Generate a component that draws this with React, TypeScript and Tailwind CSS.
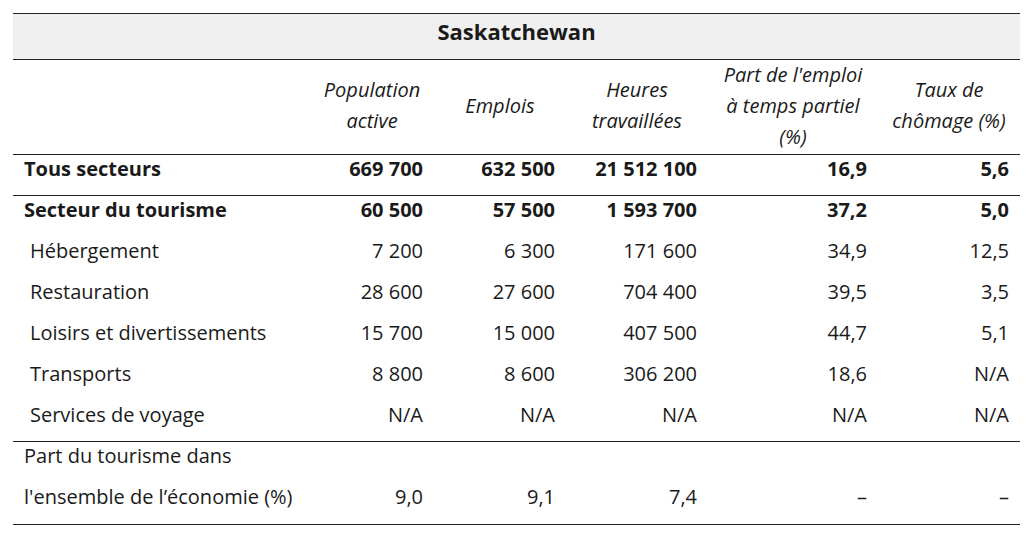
import type { FC } from "react";

type Row = {
  label: string;
  values: string[];
  bold?: boolean;
  sub?: boolean;
};

const tourism: Row[] = [
  { label: "Secteur du tourisme", values: ["60 500", "57 500", "1 593 700", "37,2", "5,0"], bold: true },
  { label: "Hébergement", values: ["7 200", "6 300", "171 600", "34,9", "12,5"], sub: true },
  { label: "Restauration", values: ["28 600", "27 600", "704 400", "39,5", "3,5"], sub: true },
  { label: "Loisirs et divertissements", values: ["15 700", "15 000", "407 500", "44,7", "5,1"], sub: true },
  { label: "Transports", values: ["8 800", "8 600", "306 200", "18,6", "N/A"], sub: true },
  { label: "Services de voyage", values: ["N/A", "N/A", "N/A", "N/A", "N/A"], sub: true },
];

const headers = [
  ["Population", "active"],
  ["Emplois"],
  ["Heures", "travaillées"],
  ["Part de l'emploi", "à temps partiel", "(%)"],
  ["Taux de", "chômage (%)"],
];

const DataRow: FC<{ row: Row }> = ({ row }) => (
  <tr className={row.bold ? "font-bold" : ""}>
    <td className={`h-[41px] align-top pr-[11px] ${row.sub ? "pl-[17px]" : "pl-[11px]"}`}>
      {row.label}
    </td>
    {row.values.map((v, i) => (
      <td key={i} className="h-[41px] align-top text-right pr-[11px]">
        {v}
      </td>
    ))}
  </tr>
);

const App: FC = () => {
  return (
    <div
      className="bg-white min-h-screen pt-[13px] pl-[13px] text-[#1a1a1a] text-[20px] leading-[28px]"
      style={{ fontFamily: '"Open Sans", "Noto Sans", sans-serif' }}
    >
      <table className="border-collapse table-fixed w-[1007px]">
        <colgroup>
          <col className="w-[297px]" />
          <col className="w-[124px]" />
          <col className="w-[132px]" />
          <col className="w-[142px]" />
          <col className="w-[170px]" />
          <col className="w-[142px]" />
        </colgroup>
        <thead>
          <tr className="bg-[#f0f0f0] border-t border-b border-[#222]">
            <th colSpan={6} className="h-[46px] align-top pt-[3px] font-bold text-center text-[22px]">
              Saskatchewan
            </th>
          </tr>
          <tr className="border-b border-[#222]">
            <th className="h-[95px]" />
            {headers.map((h, i) => (
              <th key={i} className="h-[95px] align-middle pb-px text-center font-normal italic leading-[31px]">
                <div className="-mt-[3px]">
                  {h.map((line) => (
                    <div key={line}>{line}</div>
                  ))}
                </div>
              </th>
            ))}
          </tr>
        </thead>
        <tbody>
          <tr className="font-bold border-b border-[#222]">
            <td className="h-[41px] align-top pl-[11px]">Tous secteurs</td>
            {["669 700", "632 500", "21 512 100", "16,9", "5,6"].map((v, i) => (
              <td key={i} className="h-[41px] align-top text-right pr-[11px]">
                {v}
              </td>
            ))}
          </tr>
          {tourism.map((r) => (
            <DataRow key={r.label} row={r} />
          ))}
          <tr className="border-t border-b border-[#222]">
            <td className="align-top pl-[11px]">
              <div className="h-[41px]">Part du tourisme dans</div>
              <div className="h-[41px]">l'ensemble de l’économie (%)</div>
            </td>
            {["9,0", "9,1", "7,4", "–", "–"].map((v, i) => (
              <td key={i} className="align-top text-right pr-[11px]">
                <div className="h-[41px]" />
                <div className="h-[41px]">{v}</div>
              </td>
            ))}
          </tr>
        </tbody>
      </table>
    </div>
  );
};

export default App;
